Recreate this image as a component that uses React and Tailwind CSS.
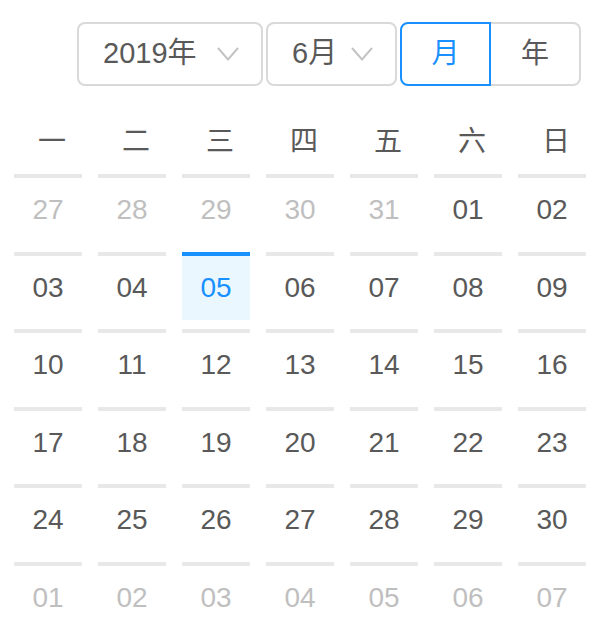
import React from 'react';

const weekdays = ['一', '二', '三', '四', '五', '六', '日'];

// 6 weeks: tail of May, June, head of July
const buildDays = () => {
  const days = [];
  for (let d = 27; d <= 31; d++) days.push({ label: String(d), dim: true });
  for (let d = 1; d <= 30; d++) days.push({ label: String(d).padStart(2, '0'), dim: false, selected: d === 5 });
  for (let d = 1; d <= 7; d++) days.push({ label: String(d).padStart(2, '0'), dim: true });
  return days;
};

const Chevron = () => (
  <svg width="22" height="14" viewBox="0 0 22 14" fill="none">
    <polyline points="1,1 11,12.5 21,1" stroke="#c4c4c4" strokeWidth="2" />
  </svg>
);

const Select = ({ label, width }) => (
  <div
    className={`flex items-center justify-between h-[64px] pl-[24px] pr-[22px] border-2 border-[#d9d9d9] rounded-[8px] text-[29px] text-[#595959] ${width}`}
  >
    <span>{label}</span>
    <Chevron />
  </div>
);

const App = () => {
  const days = buildDays();

  return (
    <div className="w-[606px] h-[642px] bg-white overflow-hidden font-['Liberation_Sans','Noto_Sans_CJK_SC',sans-serif]">
      {/* header */}
      <div className="flex justify-end gap-[3px] pt-[22px] pr-[25px]">
        <Select label="2019年" width="w-[186px]" />
        <Select label="6月" width="w-[131px]" />
        <div className="flex h-[64px] text-[28px]">
          <div className="w-[91px] flex items-center justify-center border-2 border-[#1890ff] rounded-l-[8px] text-[#1890ff]">
            月
          </div>
          <div className="w-[90px] flex items-center justify-center border-2 border-l-0 border-[#d9d9d9] rounded-r-[8px] text-[#595959]">
            年
          </div>
        </div>
      </div>

      {/* weekdays */}
      <div className="grid grid-cols-[repeat(7,84px)] px-[6px] mt-[24px]">
        {weekdays.map((w) => (
          <div key={w} className="h-[64px] flex items-center justify-center pl-[8px] text-[28px] text-[#595959]">
            {w}
          </div>
        ))}
      </div>

      {/* dates */}
      <div className="grid grid-cols-[repeat(7,84px)] px-[6px] gap-y-[9.6px]">
        {days.map((d, i) => (
          <div
            key={i}
            className={`mx-[8px] h-[68px] border-t-4 flex items-center justify-center text-[28px] ${
              d.selected
                ? 'border-[#1890ff] bg-[#ebf7ff] text-[#1890ff]'
                : d.dim
                ? 'border-[#e8e8e8] text-[#bfbfbf]'
                : 'border-[#e8e8e8] text-[#595959]'
            }`}
          >
            {d.label}
          </div>
        ))}
      </div>
    </div>
  );
};

export default App;
